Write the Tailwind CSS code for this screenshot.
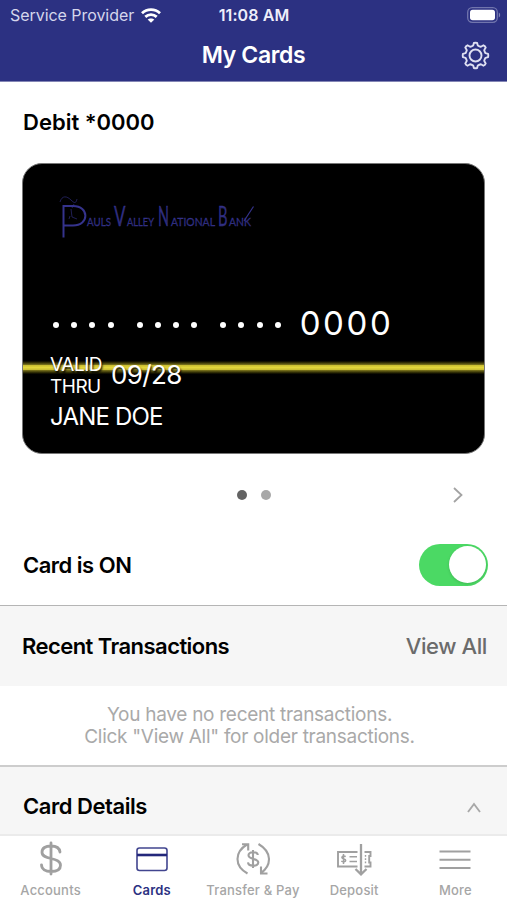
<!DOCTYPE html>
<html lang="en">
<head>
    <meta charset="UTF-8">
    <meta name="viewport" content="width=device-width, initial-scale=1.0">
    <title>My Cards</title>
    <script src="https://cdn.jsdelivr.net/npm/@tailwindcss/browser@4"></script>
</head>
<body class="bg-white text-black font-['Inter',sans-serif]">
    <div class="w-[507px] h-[900px] flex flex-col overflow-hidden">
        <!-- Header -->
        <header class="h-[82px] shrink-0 bg-[#2c3182] border-b border-[#8386b5] text-white">
            <div class="h-[30px] grid grid-cols-[1fr_auto_1fr] items-center pl-[10px] pr-[9px]">
                <div class="flex items-center gap-[7px] text-[#d5d6ec] text-base whitespace-nowrap">
                    <span class="tracking-[-0.05px]">Service Provider</span>
                    <svg class="w-5 h-[15px] shrink-0" viewBox="0 0 20 15" fill="none" stroke="#fff" stroke-width="2.8">
                        <path d="M1 5.2C6 .4 14 .4 19 5.2"/>
                        <path d="M4.3 8.9c3.3-3 8.1-3 11.4 0"/>
                        <path d="M10 14.8 6.6 11.6c1.7-1.6 5.1-1.6 6.8 0z" fill="#fff" stroke="none"/>
                    </svg>
                </div>
                <div class="text-center text-base font-semibold text-[#eeeefa] tracking-[0.1px]">11:08 AM</div>
                <svg class="w-[34px] h-4 justify-self-end -mr-[3px]" viewBox="0 0 34 16">
                    <rect x=".7" y=".7" width="29.6" height="14.6" rx="4.5" fill="none" stroke="#7175ad" stroke-width="1.3"/>
                    <rect x="3" y="2.8" width="25" height="10.4" rx="2.7" fill="#fff"/>
                    <path d="M31.8 5.5c1.8.8 1.8 4.2 0 5z" fill="#8083b8"/>
                </svg>
            </div>
            <div class="h-[51px] grid grid-cols-[1fr_auto_1fr] items-center px-[17px]">
                <h1 class="col-start-2 text-[23px] font-semibold tracking-[-0.35px]">My Cards</h1>
                <svg class="w-[29px] h-[29px] justify-self-end" viewBox="-14.5 -14.5 29 29" fill="none" stroke="#dfe0f2" stroke-width="1.9" stroke-linejoin="round">
                    <path d="M-2.3-10-1.6-12.6Q0-13 1.6-12.6L2.3-10Q3.9-9 5.4-8.7L8-10.2Q9.6-9.6 10.2-8L8.7-5.4Q9-3.9 10-2.3L12.6-1.6Q13 0 12.6 1.6L10 2.3Q9 3.9 8.7 5.4L10.2 8Q9.6 9.6 8 10.2L5.4 8.7Q3.9 9 2.3 10L1.6 12.6Q0 13-1.6 12.6L-2.3 10Q-3.9 9-5.4 8.7L-8 10.2Q-9.6 9.6-10.2 8L-8.7 5.4Q-9 3.9-10 2.3L-12.6 1.6Q-13 0-12.6-1.6L-10-2.3Q-9-3.9-8.7-5.4L-10.2-8Q-9.6-9.6-8-10.2L-5.4-8.7Q-3.9-9-2.3-10Z"/>
                    <circle r="6"/>
                </svg>
            </div>
        </header>

        <!-- Card carousel -->
        <section class="h-[442px] shrink-0 px-[22px]">
            <h2 class="h-[81px] flex items-center pl-[1px] text-[22px] font-semibold">Debit *0000</h2>
            <div class="h-[291px] w-[463px] rounded-[20px] bg-black border border-[#777] overflow-hidden relative">
                <div class="absolute inset-x-0 top-[196px] h-[15px] bg-linear-to-b from-black via-[#e5d83c] to-black"></div>
                <div class="absolute inset-x-0 top-[201px] h-[5px] bg-[#e3d63b]/70"></div>
                <div class="relative h-full text-white [text-shadow:1px_2px_2px_#000]">
                    <!-- Bank logo -->
                    <svg class="block w-[240px] h-[82px]" viewBox="0 0 240 82" fill="none" stroke="#35338c">
                        <path d="M40.500 73.500V42H50C66.500 42 66.500 61.500 50 61.500H41" stroke-width="2"/>
                        <path d="M37 38C39 31 44 32 48 36S53 39 54 35M49 44 51 40M48 45l1 8 5 2M47 52l-1 3" stroke-width="1" opacity=".6"/>
                        <g fill="#35338c" stroke-width=".3" font-family="Lato, sans-serif">
                            <text x="64" y="61.500" font-size="12" textLength="24" lengthAdjust="spacingAndGlyphs">AULS</text>
                            <text x="91" y="61.500" font-size="26" textLength="11.500" lengthAdjust="spacingAndGlyphs">V</text>
                            <text x="104" y="61.500" font-size="12" textLength="27" lengthAdjust="spacingAndGlyphs">ALLEY</text>
                            <text x="135" y="61.500" font-size="26" textLength="11" lengthAdjust="spacingAndGlyphs">N</text>
                            <text x="148" y="61.500" font-size="12" textLength="44" lengthAdjust="spacingAndGlyphs">ATIONAL</text>
                            <text x="195" y="61.500" font-size="26" textLength="9.500" lengthAdjust="spacingAndGlyphs">B</text>
                            <text x="206" y="61.500" font-size="12" textLength="22" lengthAdjust="spacingAndGlyphs">ANK</text>
                        </g>
                        <path d="M221 57 230.500 42.500" stroke-width="1.200"/>
                    </svg>
                    <!-- Card number -->
                    <div class="mt-[58px] h-10 flex items-center pl-[30px]">
                        <div class="flex gap-[23px] pt-[1px]">
                            <div class="flex gap-[12.2px]">
                                <i class="w-1.5 h-1.5 rounded-full bg-white"></i><i class="w-1.5 h-1.5 rounded-full bg-white"></i><i class="w-1.5 h-1.5 rounded-full bg-white"></i><i class="w-1.5 h-1.5 rounded-full bg-white"></i>
                            </div>
                            <div class="flex gap-[12.2px]">
                                <i class="w-1.5 h-1.5 rounded-full bg-white"></i><i class="w-1.5 h-1.5 rounded-full bg-white"></i><i class="w-1.5 h-1.5 rounded-full bg-white"></i><i class="w-1.5 h-1.5 rounded-full bg-white"></i>
                            </div>
                            <div class="flex gap-[12.2px]">
                                <i class="w-1.5 h-1.5 rounded-full bg-white"></i><i class="w-1.5 h-1.5 rounded-full bg-white"></i><i class="w-1.5 h-1.5 rounded-full bg-white"></i><i class="w-1.5 h-1.5 rounded-full bg-white"></i>
                            </div>
                        </div>
                        <span class="ml-[19px] text-[33px] tracking-[2.6px]">0000</span>
                    </div>
                    <div class="mt-[8px] flex items-center pl-[27px]">
                        <div class="pt-[2px] text-[19px] leading-[22px] tracking-[-0.5px]">VALID<br>THRU</div>
                        <div class="ml-[9px] -mt-px text-[26px] leading-[44px] tracking-[-0.6px]">09/28</div>
                    </div>
                    <div class="mt-[4px] pl-[27px] text-[24px] leading-[30px] tracking-[-0.8px]">JANE DOE</div>
                </div>
            </div>
            <div class="h-[70px] pt-[12px] flex items-center">
                <div class="ml-[214.5px] flex gap-[14px]">
                    <span class="w-[10px] h-[10px] rounded-full bg-[#636363]"></span>
                    <span class="w-[10px] h-[10px] rounded-full bg-[#a8a8a8]"></span>
                </div>
                <svg class="w-[10px] h-4 ml-auto mr-[22px]" viewBox="0 0 10 16" fill="none" stroke="#a3a3a3" stroke-width="1.800"><path d="M1 1l7.500 7L1 15"/></svg>
            </div>
        </section>

        <!-- Card switch -->
        <section class="h-[81px] shrink-0 flex items-center justify-between pl-[23px] pr-[19px]">
            <h2 class="pt-px text-[22px] font-semibold tracking-[-0.5px]">Card is ON</h2>
            <div class="w-[69px] h-[42px] rounded-full bg-[#4bd964] p-[2.5px] flex justify-end">
                <span class="w-[37px] h-[37px] rounded-full bg-white shadow-[0_1px_3px_rgba(0,0,0,0.15)]"></span>
            </div>
        </section>

        <!-- Recent transactions -->
        <section class="h-[81px] shrink-0 flex items-center justify-between bg-[#f6f6f6] border-t border-[#b5b5b5] pl-[22px] pr-[20px] text-[22px]">
            <h2 class="font-semibold tracking-[-0.55px]">Recent Transactions</h2>
            <a class="font-medium tracking-[-0.4px] text-[#6b6b6b]">View All</a>
        </section>
        <p class="h-[79px] shrink-0 pt-[18px] pr-[8px] text-center text-[19px] leading-[22px] tracking-[-0.28px] text-[#a9a9a9]">You have no recent transactions.<br>Click "View All" for older transactions.</p>

        <!-- Card details -->
        <section class="h-[69px] shrink-0 flex items-center justify-between bg-[#f6f6f6] border-t-2 border-[#cdcdcd] pl-[23px] pr-[26px] pt-[12px]">
            <h2 class="text-[22px] font-semibold tracking-[-0.45px]">Card Details</h2>
            <svg class="w-[14px] h-[11px] mt-px" viewBox="0 0 14 11" fill="none" stroke="#a8a8a8" stroke-width="1.900"><path d="M1 10 7 2l6 8"/></svg>
        </section>

        <!-- Tab bar -->
        <nav class="h-[66px] shrink-0 grid grid-cols-5 border-t-2 border-[#ebebeb] pt-[5px] pr-[1px] text-center text-[13px] leading-4 font-medium tracking-[0.2px] text-[#a6a6a6] whitespace-nowrap">
            <a class="flex flex-col items-center gap-[5px]">
                <svg class="w-9 h-9" viewBox="0 0 36 36" fill="none" stroke="#a0a0a0" stroke-width="2.800" stroke-linecap="round"><path d="M18 2v31M27 11c-.5-4-4-6-9-6-5.500 0-9 2-9 6.200 0 8.300 18.500 4.300 18.500 13 0 4.500-4 6.300-9.500 6.300S8.500 28 8.500 23.800"/></svg>
                Accounts
            </a>
            <a class="flex flex-col items-center gap-[5px] text-[#2c3182] font-semibold">
                <svg class="w-9 h-9" viewBox="0 0 36 36" fill="none" stroke="#41458f" stroke-width="1.600"><rect x="3" y="7" width="30" height="22.500" rx="2.500"/><path d="M3 14h30" stroke="#23277b" stroke-width="2.600"/></svg>
                Cards
            </a>
            <a class="flex flex-col items-center gap-[5px]">
                <svg class="w-9 h-9" viewBox="0 0 36 36" fill="none" stroke="#a0a0a0" stroke-width="2.100"><path d="M12.500 32.500C-1 25-.5 11 12 3.500M7 3.200h6.200V9.500M23.500 3C37 11 37 24 26 32M26 25.500v7h6.500"/><path d="M18 9v18M22.800 14c-.3-4-9.300-3.500-9.300.3 0 4.800 9.800 2.500 9.800 7.300 0 4.300-10.100 4-10.300-.2" stroke-width="2.100"/></svg>
                Transfer &amp; Pay
            </a>
            <a class="flex flex-col items-center gap-[5px]">
                <svg class="w-9 h-9" viewBox="0 0 36 36" fill="none" stroke="#a0a0a0" stroke-width="1.900"><path d="M21.500 11H2v14.500h19.500M28.500 11H34.500v4h-1.300v6.500h1.300v4h-6"/><path d="M25 3v30M19.500 28l5.500 5.300 5.500-5.300" stroke-width="2.300"/><path d="M13.500 15.700h7.500M13.500 20.500h7.500M7.500 13v10M9.700 15.700c-1.800-1.300-4.200-.3-3.700 1.100.5 1.500 3.500.8 3.700 2.600.1 1.400-2.400 1.900-4.400.7" stroke-width="1.500"/><path d="M29.500 14v9" stroke-width="1.400" stroke-dasharray="1.800 1.400"/></svg>
                Deposit
            </a>
            <a class="flex flex-col items-center gap-[5px]">
                <svg class="w-9 h-9" viewBox="0 0 36 36" stroke="#a0a0a0" stroke-width="1.900"><path d="M2.500 10.500h31M2.500 18.700h31M2.500 27h31"/></svg>
                More
            </a>
        </nav>
    </div>
</body>
</html>
